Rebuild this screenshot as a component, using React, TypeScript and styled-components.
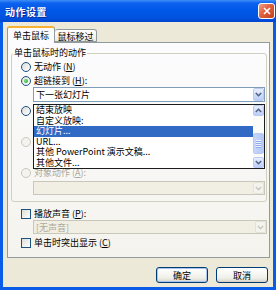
import React from 'react';
import styled, { createGlobalStyle } from 'styled-components';

const GlobalStyle = createGlobalStyle`
  html, body {
    margin: 0;
    padding: 0;
    background: #ffffff;
  }
  body {
    font-family: "Noto Sans CJK SC", "Noto Sans", sans-serif;
    font-size: 9px;
    line-height: 11px;
    color: #000;
  }
`

const Window = styled.div`
  position: relative;
  width: 276px;
  height: 290px;
  box-sizing: border-box;
  display: flex;
  flex-direction: column;
  background: #0a5ce8;
  padding: 0 3px 3px;
`

const TitleBar = styled.div`
  height: 22px;
  margin: 0 -3px;
  display: flex;
  align-items: center;
  justify-content: space-between;
  padding: 0 1px 0 5px;
  background: linear-gradient(180deg, #3d8ef8 0%, #0d62ee 14%, #0058e8 45%, #0053e0 80%, #0046d0 100%);
`

const Title = styled.span`
  color: #fff;
  font-weight: bold;
  font-size: 10px;
  letter-spacing: 0.5px;
  text-shadow: 1px 1px 0 #0a2a9a;
`

const CloseButton = styled.div`
  width: 17px;
  height: 16px;
  box-sizing: border-box;
  border: 1px solid #fff;
  border-radius: 3px;
  background: linear-gradient(135deg, #f0a08a 0%, #e0613e 45%, #c4401c 100%);
  display: flex;
  align-items: center;
  justify-content: center;
`

const Body = styled.div`
  flex: 1;
  background: #ece9d8;
  display: flex;
  flex-direction: column;
  padding: 4px 3px 4px 4px;
`

const TabRow = styled.div`
  display: flex;
  align-items: flex-end;
  height: 16px;
  position: relative;
  z-index: 1;
`

const Tab = styled.div<{ $active?: boolean }>`
  box-sizing: border-box;
  height: ${p => (p.$active ? 17 : 13)}px;
  margin-bottom: ${p => (p.$active ? -1 : 0)}px;
  width: ${p => (p.$active ? 48 : 42)}px;
  display: flex;
  align-items: center;
  justify-content: center;
  border: 1px solid #919b9c;
  border-top: ${p => (p.$active ? '2px solid #f7b233' : '1px solid #919b9c')};
  border-bottom: ${p => (p.$active ? 'none' : '1px solid #919b9c')};
  border-left: ${p => (p.$active ? '1px solid #919b9c' : 'none')};
  border-radius: 3px 3px 0 0;
  background: ${p => (p.$active ? '#fcfcfe' : 'linear-gradient(#ffffff, #ecebe6)')};
  padding-top: ${p => (p.$active ? 0 : 1)}px;
`

const Panel = styled.div`
  box-sizing: border-box;
  height: 216px;
  border: 1px solid #919b9c;
  background: linear-gradient(#fcfcfe, #f4f3ee);
  padding: 5px 2px 0 3px;
  display: flex;
  flex-direction: column;
`

const GroupBox = styled.fieldset`
  margin: 0;
  padding: 0;
  border: 1px solid #d0d0bf;
  border-radius: 3px;
  min-width: 0;
`

const GroupLegend = styled.legend`
  padding: 0 1px;
  margin-left: 1px;
  line-height: 10px;
`

const GroupContent = styled.div`
  display: flex;
  flex-direction: column;
  padding: 2px 1px 6px 9px;
`

const OptionRow = styled.div<{ $gap?: number; $disabled?: boolean }>`
  height: 13px;
  margin-top: ${p => p.$gap ?? 0}px;
  display: flex;
  align-items: center;
  gap: 3px;
  white-space: nowrap;
  color: ${p => (p.$disabled ? '#aca899' : '#000')};
`

const Radio = styled.span<{ $checked?: boolean; $disabled?: boolean }>`
  box-sizing: border-box;
  width: 10px;
  height: 10px;
  flex: none;
  border-radius: 50%;
  border: 1px solid ${p => (p.$disabled ? '#cac8bb' : '#1c5180')};
  background: ${p => (p.$disabled ? '#f4f3ee' : 'linear-gradient(135deg, #dcdcd7, #ffffff)')};
  display: flex;
  align-items: center;
  justify-content: center;
  &::after {
    content: '';
    display: ${p => (p.$checked ? 'block' : 'none')};
    width: 4px;
    height: 4px;
    border-radius: 50%;
    background: radial-gradient(circle at 35% 35%, #7ee07a, #21a121);
  }
`

const Check = styled.span`
  box-sizing: border-box;
  width: 10px;
  height: 10px;
  flex: none;
  border: 1px solid #1c5180;
  background: linear-gradient(135deg, #dcdcd7, #ffffff);
`

const Combo = styled.div<{ $disabled?: boolean; $indent?: number; $gap?: number; $h?: number }>`
  box-sizing: border-box;
  height: ${p => p.$h ?? 15}px;
  margin-left: ${p => p.$indent ?? 12}px;
  margin-top: ${p => p.$gap ?? 0}px;
  border: 1px solid ${p => (p.$disabled ? '#c9c7ba' : '#7f9db9')};
  background: ${p => (p.$disabled ? '#f1efe4' : '#fff')};
  color: ${p => (p.$disabled ? '#aca899' : '#000')};
  display: flex;
  align-items: center;
  padding: 0 0 0 2px;
`

const ComboText = styled.span`
  flex: 1;
  white-space: nowrap;
`

const ArrowButton = styled.span<{ $disabled?: boolean }>`
  box-sizing: border-box;
  width: 11px;
  align-self: stretch;
  border: 1px solid ${p => (p.$disabled ? '#e4e2d6' : '#b9caf3')};
  border-radius: 2px;
  background: ${p => (p.$disabled ? '#f4f3ee' : 'linear-gradient(#e8effd, #bccdf8)')};
  display: flex;
  align-items: center;
  justify-content: center;
`

const Lower = styled.div`
  display: flex;
  flex-direction: column;
  padding-left: 10px;
  margin-top: 5px;
`

const ButtonRow = styled.div`
  display: flex;
  justify-content: flex-end;
  gap: 8px;
  margin-top: 9px;
  padding-right: 2px;
`

const Button = styled.button<{ $default?: boolean }>`
  box-sizing: border-box;
  width: 52px;
  height: 16px;
  padding: 0;
  font: inherit;
  color: #000;
  border: 1px solid #003c74;
  border-radius: 3px;
  background: linear-gradient(#ffffff, #f0f0ea 70%, #d8d5c8);
  box-shadow: ${p => (p.$default ? 'inset 0 0 0 1px #a8c4f0' : 'inset 0 -1px 0 #d6d0c5')};
`

const DropList = styled.div`
  position: absolute;
  left: 33px;
  top: 104px;
  width: 232px;
  height: 65px;
  box-sizing: border-box;
  border: 1px solid #1c1c1c;
  background: #fff;
  display: flex;
  z-index: 5;
`

const ListItems = styled.div`
  flex: 1;
  min-width: 0;
`

const ListItem = styled.div<{ $selected?: boolean }>`
  height: 10.5px;
  line-height: 10.5px;
  padding-left: 2px;
  white-space: nowrap;
  background: ${p => (p.$selected ? '#316ac5' : 'transparent')};
  color: ${p => (p.$selected ? '#fff' : '#000')};
`

const ScrollBar = styled.div`
  width: 11px;
  display: flex;
  flex-direction: column;
  background: #fbfbf8;
`

const ScrollButton = styled.span`
  box-sizing: border-box;
  height: 11px;
  border: 1px solid #b9caf3;
  border-radius: 2px;
  background: linear-gradient(#e8effd, #bccdf8);
  display: flex;
  align-items: center;
  justify-content: center;
`

const ScrollTrack = styled.div`
  flex: 1;
  display: flex;
  flex-direction: column;
`

const Thumb = styled.div<{ $top: number; $h: number }>`
  box-sizing: border-box;
  margin-top: ${p => p.$top}px;
  height: ${p => p.$h}px;
  border: 1px solid #b9caf3;
  border-radius: 2px;
  background: linear-gradient(90deg, #c8d6fb, #b3c7f6);
  display: flex;
  flex-direction: column;
  align-items: center;
  justify-content: center;
  gap: 1px;
`

const Grip = styled.span`
  width: 5px;
  height: 1px;
  background: #eef3ff;
  box-shadow: 0 1px 0 #8faaea;
`

const Chevron = ({ up, color = '#4d6185' }: { up?: boolean; color?: string }) => (
  <svg width="7" height="5" viewBox="0 0 7 5">
    <polyline
      points={up ? '0.8,4 3.5,1.3 6.2,4' : '0.8,1 3.5,3.7 6.2,1'}
      fill="none"
      stroke={color}
      strokeWidth="1.5"
    />
  </svg>
)

const listItems = ['结束放映', '自定义放映:', '幻灯片...', 'URL...', '其他 PowerPoint 演示文稿...', '其他文件...']

const App = () => {
  return (
    <>
      <GlobalStyle />
      <Window>
        <TitleBar>
          <Title>动作设置</Title>
          <CloseButton>
            <svg width="8" height="8" viewBox="0 0 8 8">
              <path d="M1 1 L7 7 M7 1 L1 7" stroke="#fff" strokeWidth="1.6" />
            </svg>
          </CloseButton>
        </TitleBar>
        <Body>
          <TabRow>
            <Tab $active>单击鼠标</Tab>
            <Tab>鼠标移过</Tab>
          </TabRow>
          <Panel>
            <GroupBox>
              <GroupLegend>单击鼠标时的动作</GroupLegend>
              <GroupContent>
                <OptionRow>
                  <Radio />
                  <span>无动作 (<u>N</u>)</span>
                </OptionRow>
                <OptionRow $gap={1}>
                  <Radio $checked />
                  <span>超链接到 (<u>H</u>):</span>
                </OptionRow>
                <Combo>
                  <ComboText>下一张幻灯片</ComboText>
                  <ArrowButton>
                    <Chevron />
                  </ArrowButton>
                </Combo>
                {/* the rows below are covered by the open drop-down list */}
                <OptionRow $gap={2}>
                  <Radio />
                </OptionRow>
                <Combo />
                <OptionRow $gap={3} $disabled>
                  <Radio $disabled />
                </OptionRow>
                <Combo $disabled />
                <OptionRow $gap={3} $disabled>
                  <Radio $disabled />
                  <span>对象动作 (<u>A</u>):</span>
                </OptionRow>
                <Combo $disabled $gap={2} $h={14}>
                  <ComboText />
                  <ArrowButton $disabled>
                    <Chevron color="#c9c7ba" />
                  </ArrowButton>
                </Combo>
              </GroupContent>
            </GroupBox>
            <Lower>
              <OptionRow>
                <Check />
                <span>播放声音 (<u>P</u>):</span>
              </OptionRow>
              <Combo $disabled $h={14}>
                <ComboText>[无声音]</ComboText>
                <ArrowButton $disabled>
                  <Chevron color="#c9c7ba" />
                </ArrowButton>
              </Combo>
              <OptionRow $gap={2}>
                <Check />
                <span>单击时突出显示 (<u>C</u>)</span>
              </OptionRow>
            </Lower>
          </Panel>
          <ButtonRow>
            <Button $default>确定</Button>
            <Button>取消</Button>
          </ButtonRow>
        </Body>
        <DropList>
          <ListItems>
            {listItems.map((item, i) => (
              <ListItem key={item} $selected={i === 2}>
                {item}
              </ListItem>
            ))}
          </ListItems>
          <ScrollBar>
            <ScrollButton>
              <Chevron up />
            </ScrollButton>
            <ScrollTrack>
              <Thumb $top={17} $h={21}>
                <Grip />
                <Grip />
                <Grip />
                <Grip />
              </Thumb>
            </ScrollTrack>
            <ScrollButton>
              <Chevron />
            </ScrollButton>
          </ScrollBar>
        </DropList>
      </Window>
    </>
  );
}

export default App;
